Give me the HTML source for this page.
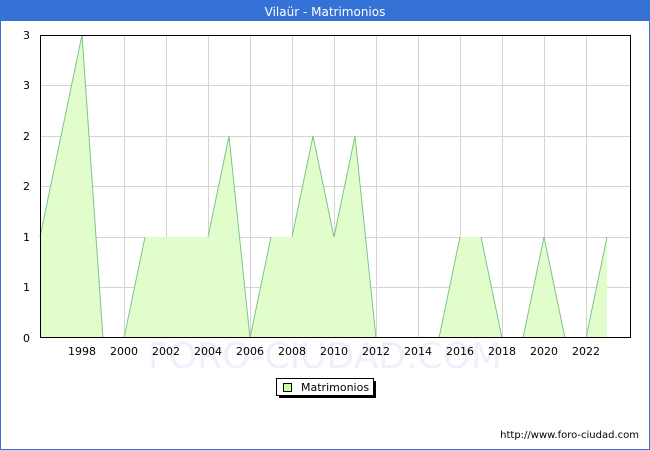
<!DOCTYPE html>
<html><head><meta charset="utf-8"><style>
body{margin:0;background:#fff}
svg{display:block;font-family:"DejaVu Sans","Liberation Sans",sans-serif}
</style></head><body>
<svg width="650" height="450" xmlns="http://www.w3.org/2000/svg">
<rect x="0.5" y="0.5" width="649" height="449" fill="#fff" stroke="#3572d6"/>
<rect x="0" y="0" width="650" height="21" fill="#3572d6"/>
<text x="325" y="16" text-anchor="middle" fill="#fff" font-size="12">Vilaür - Matrimonios</text>
<text x="325" y="368" text-anchor="middle" fill="#f0f0fa" font-size="36">FORO-CIUDAD.COM</text>
<g stroke="#d4d4d4" stroke-width="1">
<line x1="40" y1="85.5" x2="631" y2="85.5"/><line x1="40" y1="136.5" x2="631" y2="136.5"/><line x1="40" y1="186.5" x2="631" y2="186.5"/><line x1="40" y1="237.5" x2="631" y2="237.5"/><line x1="40" y1="287.5" x2="631" y2="287.5"/>
<line x1="82.5" y1="35" x2="82.5" y2="338"/><line x1="124.5" y1="35" x2="124.5" y2="338"/><line x1="166.5" y1="35" x2="166.5" y2="338"/><line x1="208.5" y1="35" x2="208.5" y2="338"/><line x1="250.5" y1="35" x2="250.5" y2="338"/><line x1="292.5" y1="35" x2="292.5" y2="338"/><line x1="334.5" y1="35" x2="334.5" y2="338"/><line x1="376.5" y1="35" x2="376.5" y2="338"/><line x1="418.5" y1="35" x2="418.5" y2="338"/><line x1="460.5" y1="35" x2="460.5" y2="338"/><line x1="502.5" y1="35" x2="502.5" y2="338"/><line x1="544.5" y1="35" x2="544.5" y2="338"/><line x1="586.5" y1="35" x2="586.5" y2="338"/>
</g>
<polygon fill="#e2fdcc" points="40,338 40,237 61,136 82,35 103,338 124,338 145,237 208,237 229,136 250,338 271,237 292,237 313,136 334,237 355,136 376,338 439,338 460,237 481,237 502,338 523,338 544,237 565,338 586,338 607,237 607,338"/>
<path fill="none" stroke="#7cc48c" stroke-width="1" d="M40,237 L82,35 L103,338 M124,338 L145,237 M208,237 L229,136 L250,338 L271,237 M292,237 L313,136 L334,237 L355,136 L376,338 M439,338 L460,237 M481,237 L502,338 M523,338 L544,237 L565,338 M586,338 L607,237"/>
<rect x="40.5" y="35.5" width="590" height="302" fill="none" stroke="#000"/>
<g font-size="11" fill="#000">
<text x="30" y="39" text-anchor="end">3</text><text x="30" y="89" text-anchor="end">3</text><text x="30" y="140" text-anchor="end">2</text><text x="30" y="190" text-anchor="end">2</text><text x="30" y="241" text-anchor="end">1</text><text x="30" y="291" text-anchor="end">1</text><text x="30" y="342" text-anchor="end">0</text>
<g text-anchor="middle">
<text x="82" y="355">1998</text><text x="124" y="355">2000</text><text x="166" y="355">2002</text><text x="208" y="355">2004</text><text x="250" y="355">2006</text><text x="292" y="355">2008</text><text x="334" y="355">2010</text><text x="376" y="355">2012</text><text x="418" y="355">2014</text><text x="460" y="355">2016</text><text x="502" y="355">2018</text><text x="544" y="355">2020</text><text x="586" y="355">2022</text>
</g></g>
<rect x="279" y="381" width="97" height="17" fill="#000"/>
<rect x="276.5" y="378.5" width="97" height="17" fill="#fff" stroke="#000"/>
<rect x="283.5" y="383.5" width="8" height="8" fill="#ccff99" stroke="#000"/>
<text x="301" y="391" font-size="11">Matrimonios</text>
<text x="639" y="438" text-anchor="end" font-size="10">http://www.foro-ciudad.com</text>
</svg>
</body></html>
